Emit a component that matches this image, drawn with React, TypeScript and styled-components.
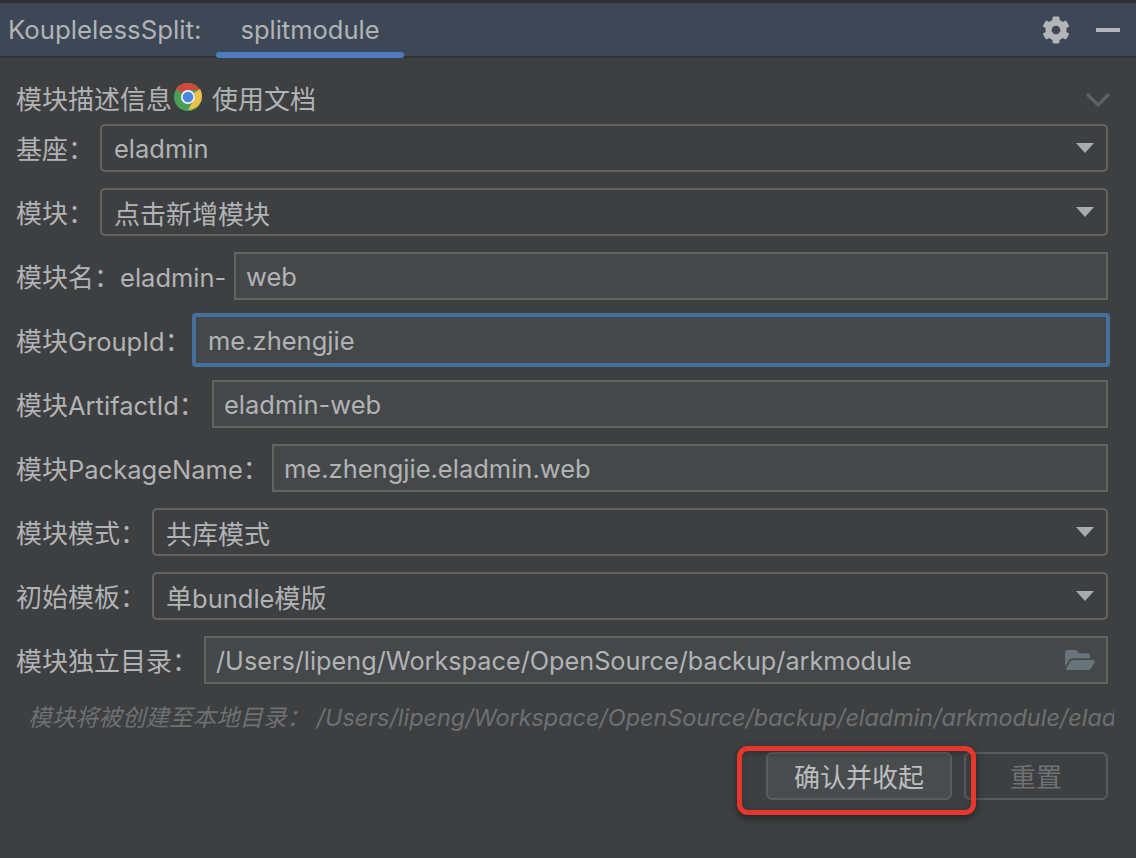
import React from "react";
import styled, { createGlobalStyle } from "styled-components";
import { FaCog, FaFolderOpen } from "react-icons/fa";

const Global = createGlobalStyle`
  html, body { margin: 0; padding: 0; background: #3d3f40; }
  body { font-family: Inter, "Noto Sans CJK SC", sans-serif; }
`;

const Page = styled.div`
  position: relative;
  width: 1136px;
  height: 858px;
  overflow: hidden;
  background: #3d3f40;
  color: #b1b3b5;
  font-size: 26px;
  border-top: 3px solid #2e2f30;
  box-sizing: border-box;
`;

const LatinRun = styled.span`
  font-size: 25.5px;
`;

const TitleRun = styled.span`
  font-size: 25.8px;
`;

const PathRun = styled.span`
  font-size: 25.25px;
`;

const NoteLatinRun = styled.span`
  font-size: 23.4px;
`;

const Header = styled.header`
  height: 53px;
  display: flex;
  align-items: stretch;
  background: #3d4755;
  border-bottom: 2px solid #323436;
  box-sizing: content-box;
  padding-left: 8px;
  padding-right: 16px;
`;

const Title = styled.div`
  display: flex;
  align-items: center;
  width: 208px;
`;

const Tab = styled.div`
  width: 188px;
  display: flex;
  align-items: center;
  justify-content: center;
  position: relative;
  &::after {
    content: "";
    position: absolute;
    left: 0;
    right: 0;
    bottom: -2px;
    height: 6px;
    border-radius: 3px;
    background: #4a7cbe;
  }
`;

const HeaderTools = styled.div`
  margin-left: auto;
  display: flex;
  align-items: center;
  gap: 26px;
  color: #b3b5b8;
`;

const Minimize = styled.span`
  display: block;
  width: 24px;
  height: 4px;
  background: #b3b5b8;
`;

const Body = styled.main`
  display: flex;
  flex-direction: column;
  padding: 21px 28px 0 16px;
`;

const DescRow = styled.div`
  display: flex;
  align-items: center;
  height: 36px;
  margin-bottom: 9px;
`;

const DocLink = styled.span`
  margin-left: 9px;
`;

const Collapse = styled.svg`
  margin-left: auto;
  margin-right: -3px;
  margin-top: 6px;
`;

const Fields = styled.div`
  display: flex;
  flex-direction: column;
  gap: 16px;
`;

const Row = styled.div<{ $offset: number }>`
  display: grid;
  grid-template-columns: ${(p) => p.$offset - 16}px 1fr;
  align-items: center;
  height: 48px;
`;

const Label = styled.label`
  white-space: nowrap;
  margin-top: -2px;
`;

const Select = styled.div`
  height: 48px;
  box-sizing: border-box;
  display: flex;
  align-items: center;
  justify-content: space-between;
  padding: 0 12px 0 12px;
  border: 2px solid #646464;
  border-radius: 5px;
`;

const Arrow = styled.span`
  width: 0;
  height: 0;
  border-left: 9px solid transparent;
  border-right: 9px solid transparent;
  border-top: 10px solid #a9abad;
`;

const Input = styled.div`
  height: 48px;
  box-sizing: border-box;
  display: flex;
  align-items: center;
  justify-content: space-between;
  padding: 0 11px 0 10px;
  background: #454849;
  border: 2px solid #646464;
  white-space: nowrap;
`;

const FocusedInput = styled(Input)`
  height: 54px;
  margin: -3px -2px;
  border: 4px solid #456f9e;
  border-radius: 4px;
  padding-left: 12px;
`;

const FolderIcon = styled(FaFolderOpen)`
  color: #68747a;
  flex: none;
`;

const Note = styled.div`
  margin-top: 16px;
  padding-left: 12px;
  margin-right: -6px;
  height: 36px;
  line-height: 36px;
  font-size: 23.5px;
  font-style: italic;
  color: #6e7072;
  white-space: nowrap;
  overflow: hidden;
`;

const Actions = styled.div`
  margin-top: 16px;
  display: flex;
  justify-content: flex-end;
  gap: 12px;
`;

const Primary = styled.button`
  width: 186px;
  height: 48px;
  padding: 0 0 2px;
  font: inherit;
  color: #bbbdbf;
  background: #484c4e;
  border: 2px solid #5a5d5f;
  border-radius: 6px;
`;

const Secondary = styled.button`
  width: 144px;
  height: 48px;
  padding: 0 0 2px;
  font: inherit;
  color: #6f7173;
  background: transparent;
  border: 2px solid #585a5c;
  border-radius: 6px;
`;

const Highlight = styled.div`
  position: absolute;
  left: 737px;
  top: 743px;
  width: 239px;
  height: 69px;
  box-sizing: border-box;
  border: 5px solid #e8372a;
  border-radius: 11px;
  box-shadow: 0 3px 8px rgba(0, 0, 0, 0.45), inset 0 2px 6px rgba(0, 0, 0, 0.25);
  pointer-events: none;
`;

const ChromeLogo = () => (
  <svg width="30" height="30" viewBox="0 0 30 30" style={{ flex: "none", marginLeft: 1 }}>
    <circle cx="15" cy="15" r="14" fill="#4a9f58" />
    <path d="M15 1a14 14 0 0 1 12.1 7H15a7 7 0 0 0-6.1 3.5L3 6.5A14 14 0 0 1 15 1z" fill="#d0493c" />
    <path d="M27.1 8A14 14 0 0 1 15 29l6-10.5A7 7 0 0 0 21 12z" fill="#f0c04a" transform="translate(0 -1)" />
    <circle cx="15" cy="15" r="7" fill="#f1f1f1" />
    <circle cx="15" cy="15" r="5.3" fill="#4d86e0" />
  </svg>
);

const mix = (text: string, Run: typeof LatinRun = LatinRun) =>
  text.split(/([\x21-\x7e]+)/).map((part, i) =>
    i % 2 ? <Run key={i}>{part}</Run> : part
  );

const selectRows = [
  { label: "基座：", offset: 100, value: "eladmin" },
  { label: "模块：", offset: 100, value: "点击新增模块" },
];
const inputRows = [
  { label: "模块ArtifactId：", offset: 212, value: "eladmin-web" },
  { label: "模块PackageName：", offset: 272, value: "me.zhengjie.eladmin.web" },
];
const modeRows = [
  { label: "模块模式：", offset: 152, value: "共库模式" },
  { label: "初始模板：", offset: 152, value: "单bundle模版" },
];

export default function App() {
  return (
    <Page>
      <Global />
      <Header>
        <Title>{mix("KouplelessSplit:", TitleRun)}</Title>
        <Tab>{mix("splitmodule")}</Tab>
        <HeaderTools>
          <FaCog size={28} />
          <Minimize />
        </HeaderTools>
      </Header>
      <Body>
        <DescRow>
          模块描述信息
          <ChromeLogo />
          <DocLink>使用文档</DocLink>
          <Collapse width="26" height="16" viewBox="0 0 26 16" fill="none">
            <path d="M2 2l11 11L24 2" stroke="#5a6064" strokeWidth="3.5" />
          </Collapse>
        </DescRow>
        <Fields>
          {selectRows.map((r) => (
            <Row key={r.label} $offset={r.offset}>
              <Label>{mix(r.label)}</Label>
              <Select>
                <span>{mix(r.value)}</span>
                <Arrow />
              </Select>
            </Row>
          ))}
          <Row $offset={234}>
            <Label>{mix("模块名：eladmin-")}</Label>
            <Input><span>{mix("web")}</span></Input>
          </Row>
          <Row $offset={194}>
            <Label>{mix("模块GroupId：")}</Label>
            <FocusedInput><span>{mix("me.zhengjie")}</span></FocusedInput>
          </Row>
          {inputRows.map((r) => (
            <Row key={r.label} $offset={r.offset}>
              <Label>{mix(r.label)}</Label>
              <Input><span>{mix(r.value)}</span></Input>
            </Row>
          ))}
          {modeRows.map((r) => (
            <Row key={r.label} $offset={r.offset}>
              <Label>{mix(r.label)}</Label>
              <Select>
                <span>{mix(r.value)}</span>
                <Arrow />
              </Select>
            </Row>
          ))}
          <Row $offset={204}>
            <Label>{mix("模块独立目录：")}</Label>
            <Input>
              <span>{mix("/Users/lipeng/Workspace/OpenSource/backup/arkmodule", PathRun)}</span>
              <FolderIcon size={30} />
            </Input>
          </Row>
        </Fields>
        <Note>
          {mix("模块将被创建至本地目录： /Users/lipeng/Workspace/OpenSource/backup/eladmin/arkmodule/eladmin-web", NoteLatinRun)}
        </Note>
        <Actions>
          <Primary>确认并收起</Primary>
          <Secondary>重置</Secondary>
        </Actions>
      </Body>
      <Highlight />
    </Page>
  );
}
